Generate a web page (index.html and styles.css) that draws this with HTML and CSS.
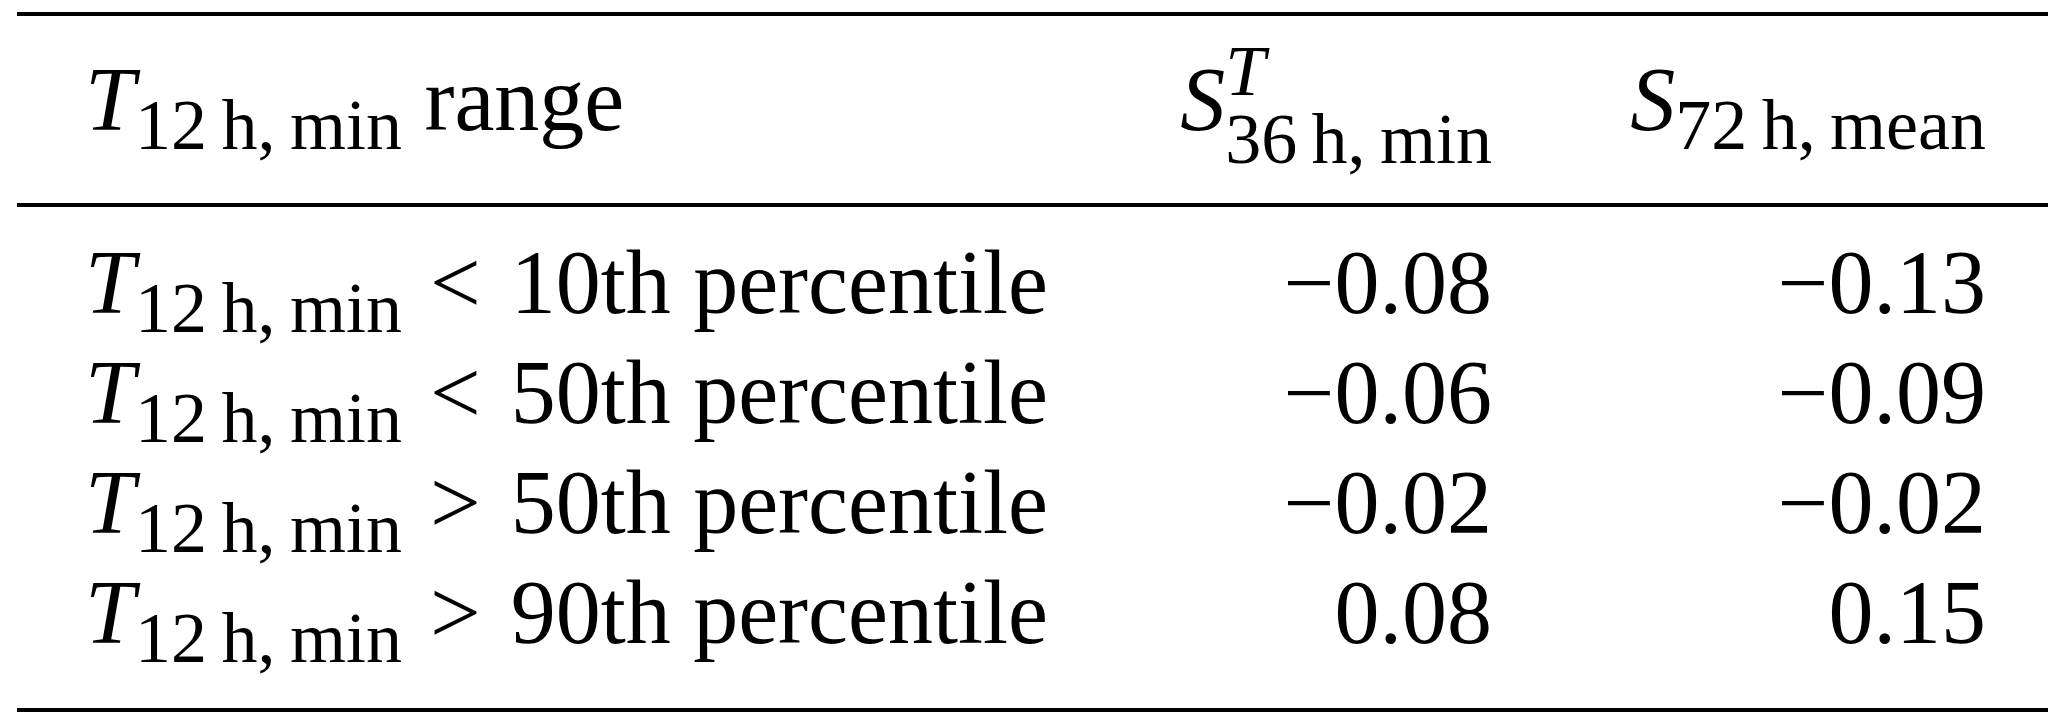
FILE: index.html
```html
<!DOCTYPE html>
<html lang="en">
<head>
    <meta charset="UTF-8">
    <title>Sensitivity by T12h,min range</title>
    <link rel="stylesheet" href="styles.css">
</head>
<body>
    <table class="stats">
        <colgroup>
            <col class="c-range">
            <col class="c-min">
            <col class="c-mean">
        </colgroup>
        <thead>
            <tr>
                <th class="label"><span class="var">T</span><span class="sub">12&thinsp;h,&thinsp;min</span> range</th>
                <th class="num"><span class="var">S</span><span class="stack"><span class="var">T</span><span>36&thinsp;h,&thinsp;min</span></span></th>
                <th class="num last"><span class="var">S</span><span class="sub">72&thinsp;h,&thinsp;mean</span></th>
            </tr>
        </thead>
        <tbody>
            <tr>
                <td class="label"><span class="var">T</span><span class="sub">12&thinsp;h,&thinsp;min</span><span class="rel">&lt;</span>10th percentile</td>
                <td class="num">&minus;0.08</td>
                <td class="num last">&minus;0.13</td>
            </tr>
            <tr>
                <td class="label"><span class="var">T</span><span class="sub">12&thinsp;h,&thinsp;min</span><span class="rel">&lt;</span>50th percentile</td>
                <td class="num">&minus;0.06</td>
                <td class="num last">&minus;0.09</td>
            </tr>
            <tr>
                <td class="label"><span class="var">T</span><span class="sub">12&thinsp;h,&thinsp;min</span><span class="rel">&gt;</span>50th percentile</td>
                <td class="num">&minus;0.02</td>
                <td class="num last">&minus;0.02</td>
            </tr>
            <tr>
                <td class="label"><span class="var">T</span><span class="sub">12&thinsp;h,&thinsp;min</span><span class="rel">&gt;</span>90th percentile</td>
                <td class="num">0.08</td>
                <td class="num last">0.15</td>
            </tr>
        </tbody>
    </table>
</body>
</html>
```

FILE: styles.css
```css
* {
    box-sizing: border-box;
    margin: 0;
    padding: 0;
}

body {
    background: #fff;
    color: #000;
    font-family: "Liberation Serif", "Times New Roman", serif;
}

.stats {
    margin: 12px 0 0 17px;
    width: 2031px;
    table-layout: fixed;
    border-collapse: separate;
    border-spacing: 0;
    border-top: 4px solid #000;
    border-bottom: 4px solid #000;
    font-size: 90px;
}

.c-range {
    width: 1000px;
}

.c-min {
    width: 475px;
}

.c-mean {
    width: 556px;
}

th {
    font-weight: normal;
    line-height: 90px;
    vertical-align: baseline;
    padding: 21px 0 30px;
    border-bottom: 4px solid #000;
    white-space: nowrap;
}

td {
    line-height: 110px;
    vertical-align: baseline;
    white-space: nowrap;
}

tbody tr:first-child td {
    padding-top: 21px;
}

tbody tr:last-child td {
    padding-bottom: 40px;
}

.label {
    text-align: left;
    padding-left: 68px;
}

.num {
    text-align: right;
}

.num.last {
    padding-right: 62px;
}

.var {
    font-style: italic;
}

.sub {
    font-size: 72px;
    line-height: 0;
    vertical-align: -19px;
}

/* super + subscript stacked on the same S */
.stack {
    display: inline-flex;
    flex-direction: column;
    vertical-align: 35px;
    font-size: 72px;
    line-height: 68px;
    text-align: left;
}

.rel {
    margin: 0 30px 0 28px;
}
```
